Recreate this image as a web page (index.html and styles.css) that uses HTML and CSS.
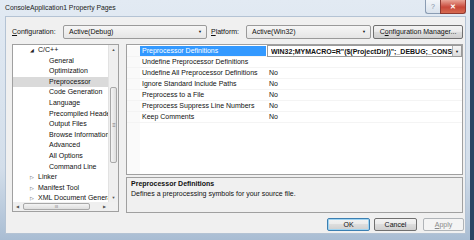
FILE: index.html
```html
<!DOCTYPE html>
<html lang="en">
<head>
  <meta charset="UTF-8">
  <title>ConsoleApplication1 Property Pages</title>
  <link rel="stylesheet" href="styles.css">
</head>
<body>
<div class="window">
  <div class="titlebar">
    <span class="title">ConsoleApplication1 Property Pages</span>
    <span class="cap-btn help">?</span>
    <span class="cap-btn close">&#x2715;</span>
  </div>

  <div class="client">
    <div class="config-row">
      <label class="lbl cfg-lbl"><u>C</u>onfiguration:</label>
      <div class="combo cfg-combo">Active(Debug)<span class="arrow">&#9660;</span></div>
      <label class="lbl plat-lbl"><u>P</u>latform:</label>
      <div class="combo plat-combo">Active(Win32)<span class="arrow">&#9660;</span></div>
      <div class="btn cfg-btn">C<u>o</u>nfiguration Manager...</div>
    </div>

    <div class="main">
      <!-- left tree -->
      <div class="tree">
        <div class="tree-body">
          <ul class="tree-list">
            <li class="lvl1"><span class="tw open">&#9698;</span>C/C++</li>
            <li class="lvl2">General</li>
            <li class="lvl2">Optimization</li>
            <li class="lvl2 sel">Preprocessor</li>
            <li class="lvl2">Code Generation</li>
            <li class="lvl2">Language</li>
            <li class="lvl2">Precompiled Headers</li>
            <li class="lvl2">Output Files</li>
            <li class="lvl2">Browse Information</li>
            <li class="lvl2">Advanced</li>
            <li class="lvl2">All Options</li>
            <li class="lvl2">Command Line</li>
            <li class="lvl1"><span class="tw">&#9655;</span>Linker</li>
            <li class="lvl1"><span class="tw">&#9655;</span>Manifest Tool</li>
            <li class="lvl1 last"><span class="tw">&#9655;</span>XML Document Generator</li>
          </ul>
          <div class="vscroll">
            <span class="sb-arrow">&#9650;</span>
            <span class="vthumb"><span class="grip">&#8801;</span></span>
            <span class="sb-fill"></span>
            <span class="sb-arrow">&#9660;</span>
          </div>
        </div>
        <div class="hscroll">
          <span class="sb-arrow">&#9664;</span>
          <span class="hthumb"><span class="grip">III</span></span>
          <span class="sb-fill"></span>
          <span class="sb-arrow">&#9654;</span>
          <span class="corner"></span>
        </div>
      </div>

      <!-- right side -->
      <div class="right">
        <div class="grid">
          <div class="prow sel">
            <span class="gutter"></span>
            <span class="pname">Preprocessor Definitions</span>
            <span class="pval edit"><span class="edit-text">WIN32;MYMACRO=R"($(ProjectDir))";_DEBUG;_CONSOLE</span><span class="edit-btn">&#9660;</span></span>
          </div>
          <div class="prow">
            <span class="gutter"></span>
            <span class="pname">Undefine Preprocessor Definitions</span>
            <span class="pval"></span>
          </div>
          <div class="prow">
            <span class="gutter"></span>
            <span class="pname">Undefine All Preprocessor Definitions</span>
            <span class="pval">No</span>
          </div>
          <div class="prow">
            <span class="gutter"></span>
            <span class="pname">Ignore Standard Include Paths</span>
            <span class="pval">No</span>
          </div>
          <div class="prow">
            <span class="gutter"></span>
            <span class="pname">Preprocess to a File</span>
            <span class="pval">No</span>
          </div>
          <div class="prow">
            <span class="gutter"></span>
            <span class="pname">Preprocess Suppress Line Numbers</span>
            <span class="pval">No</span>
          </div>
          <div class="prow">
            <span class="gutter"></span>
            <span class="pname">Keep Comments</span>
            <span class="pval">No</span>
          </div>
          <div class="grid-rest"><span class="gutter"></span></div>
        </div>
        <div class="desc">
          <div class="desc-title">Preprocessor Definitions</div>
          <div class="desc-text">Defines a preprocessing symbols for your source file.</div>
        </div>
      </div>
    </div>

    <div class="buttons">
      <div class="btn ok">OK</div>
      <div class="btn cancel">Cancel</div>
      <div class="btn apply disabled"><u>A</u>pply</div>
    </div>
  </div>
</div>
</body>
</html>
```

FILE: styles.css
```css
body {
  margin: 0;
  background-color: #2b4563;
  font-family: "Liberation Sans", Arial, sans-serif;
  font-size: 7px;
  color: #111;
  overflow: hidden;
}

.window {
  width: 470px;
  height: 240px;
  display: flex;
  flex-direction: column;
  background: linear-gradient(#e2eaf3, #d3deea 70%, #a9bdd3);
}

/* title bar */
.titlebar {
  height: 16px;
  display: flex;
  align-items: flex-start;
}

.title {
  flex: 1;
  padding-left: 5px;
  line-height: 16px;
  font-size: 6.8px;
  color: #1a1a1a;
}

.cap-btn {
  height: 13px;
  display: flex;
  align-items: center;
  justify-content: center;
  font-size: 7px;
  border: 1px solid #8a9cb3;
  border-top: none;
}

.help {
  width: 14px;
  color: #7d8da3;
  background: linear-gradient(#f2f5f9, #d9e2ec);
  border-radius: 0 0 0 3px;
  border-right: none;
}

.close {
  width: 24px;
  margin-right: 4px;
  color: #fff;
  font-weight: bold;
  background: linear-gradient(#e9a597, #c8483a 55%, #d66a50);
  border-color: #8e3a32;
  border-radius: 0 0 3px 0;
}

/* client area */
.client {
  height: 218px;
  margin: 0 4px 0 5px;
  background-color: #f0f0f0;
  border: 1px solid #b4c3d4;
  box-sizing: border-box;
  padding: 7px 2px 0 6px;
}

.config-row {
  display: flex;
  align-items: center;
  height: 15px;
}

.lbl {
  white-space: nowrap;
}

.cfg-lbl { width: 51px; }

.plat-lbl {
  width: 35px;
  margin-left: 4px;
}

.combo {
  height: 14px;
  box-sizing: border-box;
  border: 1px solid #9a9a9a;
  border-radius: 2px;
  background: linear-gradient(#f6f6f6, #e6e6e6);
  padding-left: 5px;
  display: flex;
  align-items: center;
  justify-content: space-between;
}

.combo .arrow {
  font-size: 4px;
  padding-right: 4px;
}

.cfg-combo { width: 144px; }
.plat-combo { width: 125px; }

.btn {
  box-sizing: border-box;
  height: 14px;
  display: flex;
  align-items: center;
  justify-content: center;
  border: 1px solid #707070;
  border-radius: 2px;
  background: linear-gradient(#f3f3f3, #ebebeb 45%, #dddddd 50%, #cfcfcf);
}

.cfg-btn {
  width: 90px;
  margin-left: 2px;
}

/* main area */
.main {
  display: flex;
  gap: 7px;
  margin-top: 5px;
  height: 169px;
}

.tree {
  width: 107px;
  height: 168px;
  box-sizing: border-box;
  border: 1px solid #a0a0a0;
  background-color: #fff;
  display: flex;
  flex-direction: column;
}

.tree-body {
  flex: 1;
  display: flex;
  overflow: hidden;
}

.tree-list {
  list-style: none;
  margin: 0;
  padding: 0;
  flex: 1;
  overflow: hidden;
  white-space: nowrap;
}

.tree-list li {
  height: 10.6px;
  line-height: 10.6px;
  overflow: hidden;
}

.tree-list li.last {
  height: 8px;
  line-height: 9px;
}

.lvl1 { padding-left: 17px; }
.lvl2 { padding-left: 36px; }

.tree-list .sel {
  background-color: #dadada;
}

.tw {
  display: inline-block;
  width: 8px;
  font-size: 5px;
  color: #444;
}

.tw.open { color: #222; }

.vscroll {
  width: 9px;
  display: flex;
  flex-direction: column;
  align-items: center;
  background-color: #efefef;
  border-left: 1px solid #e2e2e2;
}

.sb-arrow {
  height: 9px;
  width: 9px;
  font-size: 4px;
  line-height: 9px;
  text-align: center;
  color: #555;
}

.sb-fill { flex: 1; }

.vthumb {
  margin-top: 33px;
  width: 7px;
  height: 76px;
  box-sizing: border-box;
  border: 1px solid #a8a8a8;
  border-radius: 2px;
  background: linear-gradient(90deg, #f4f4f4, #dedede);
  display: flex;
  align-items: center;
  justify-content: center;
}

.grip {
  font-size: 6px;
  color: #777;
  letter-spacing: -1px;
}

.hscroll {
  height: 9px;
  display: flex;
  align-items: center;
  background-color: #efefef;
}

.hthumb {
  width: 67px;
  height: 7px;
  margin-left: 1px;
  box-sizing: border-box;
  border: 1px solid #a8a8a8;
  border-radius: 2px;
  background: linear-gradient(#f4f4f4, #dedede);
  display: flex;
  align-items: center;
  justify-content: center;
}

.hthumb .grip {
  font-size: 4px;
  letter-spacing: 0;
}

.corner {
  width: 9px;
  height: 9px;
  background-color: #f0f0f0;
}

/* right side */
.right {
  width: 337px;
  display: flex;
  flex-direction: column;
  gap: 2px;
}

.grid {
  height: 131px;
  box-sizing: border-box;
  border: 1px solid #a0a0a0;
  background-color: #fff;
  padding-top: 1px;
  display: flex;
  flex-direction: column;
}

.prow {
  display: flex;
  height: 11px;
  border-bottom: 1px solid #f4f4f4;
  box-sizing: border-box;
  line-height: 10px;
  white-space: nowrap;
}

.gutter {
  width: 13px;
  background-color: #fafafa;
}

.pname {
  width: 126px;
  padding-left: 2px;
  box-sizing: border-box;
}

.pval {
  flex: 1;
  padding-left: 3px;
  overflow: hidden;
}

.prow.sel .pname {
  background-color: #3399ff;
  color: #fff;
}

.pval.edit {
  display: flex;
  border: 1px solid #9a9a9a;
  margin: -1px 0 -1px 1px;
  padding-right: 0;
  font-weight: bold;
  line-height: 11px;
  background-color: #fff;
}

.edit-text {
  flex: 1;
  overflow: hidden;
}

.edit-btn {
  width: 8px;
  border-left: 1px solid #b0b0b0;
  background: linear-gradient(#f6f6f6, #dcdcdc);
  font-size: 4px;
  font-weight: normal;
  text-align: center;
}

.grid-rest {
  flex: 1;
  display: flex;
}

.desc {
  height: 36px;
  box-sizing: border-box;
  border: 1px solid #a0a0a0;
  background-color: #f0f0f0;
  padding: 1px 4px;
  line-height: 9.5px;
}

.desc-title {
  font-weight: bold;
}

/* dialog buttons */
.buttons {
  display: flex;
  justify-content: flex-end;
  margin-top: 5px;
  margin-right: -1px;
}

.buttons .btn {
  height: 13px;
  width: 43px;
}

.ok {
  border-color: #3c7fb1;
  box-shadow: inset 0 0 0 1px #9fd4f2;
}

.cancel { margin-left: 4px; }

.apply {
  margin-left: 6px;
  width: 41px !important;
}

.btn.disabled {
  color: #8a8a8a;
  border-color: #b0b4b8;
  background: #f4f4f4;
}
```
